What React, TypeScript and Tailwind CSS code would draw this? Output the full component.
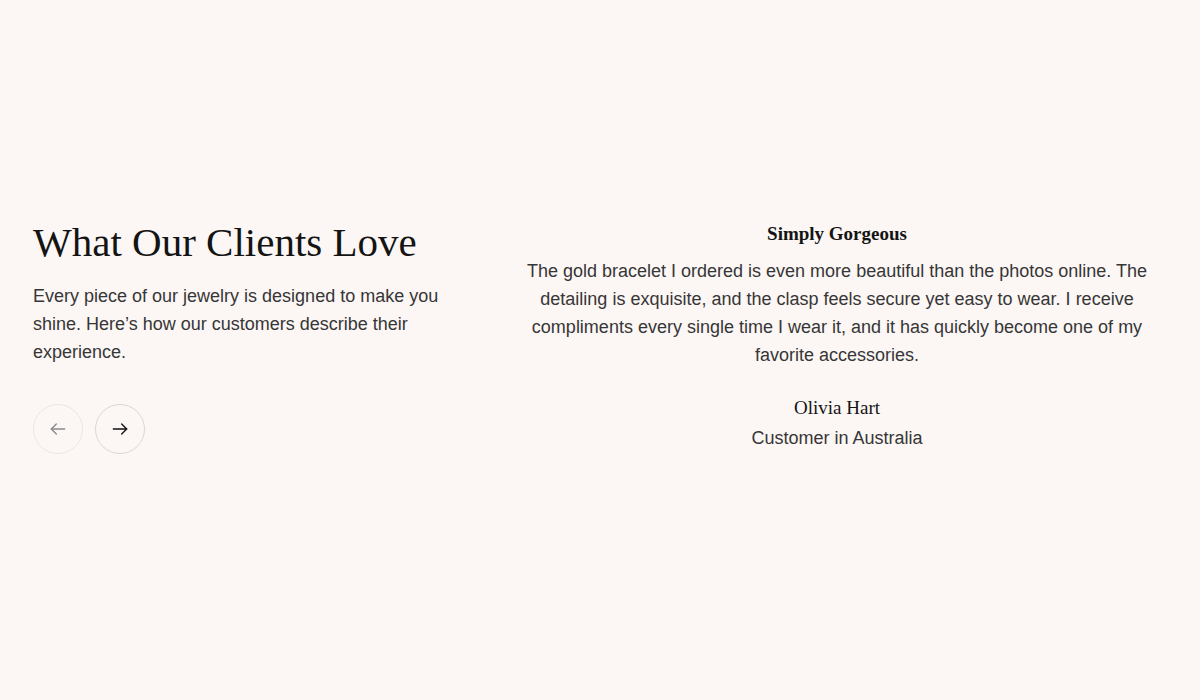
import React from "react";

const serif = "font-['Liberation_Serif',serif]";
const sans = "font-['Liberation_Sans',Arial,sans-serif]";

function ArrowLeft() {
  return (
    <svg width="20" height="20" viewBox="0 0 24 24" fill="none" stroke="currentColor" strokeWidth="1.6" strokeLinecap="round" strokeLinejoin="round">
      <path d="M20 12H4" />
      <path d="M10 6l-6 6 6 6" />
    </svg>
  );
}

function ArrowRight() {
  return (
    <svg width="20" height="20" viewBox="0 0 24 24" fill="none" stroke="currentColor" strokeWidth="1.6" strokeLinecap="round" strokeLinejoin="round">
      <path d="M4 12h16" />
      <path d="M14 6l6 6-6 6" />
    </svg>
  );
}

export default function App() {
  return (
    <div className="h-[700px] w-full bg-[#fcf7f5] pt-[215px]">
      <div className="w-full px-[33px] flex items-start">
        {/* Left intro */}
        <div className="w-[440px] shrink-0">
          <h2 className={`${serif} mt-[3px] text-[41px] leading-[48px] text-[#141414]`}>What Our Clients Love</h2>
          <p className={`${sans} mt-[16px] text-[18px] leading-[28px] text-[#363636]`}>
            Every piece of our jewelry is designed to make you shine. Here’s how our customers describe their experience.
          </p>
          <div className="mt-[38px] flex gap-[12px]">
            <button className="w-[50px] h-[50px] rounded-full border border-[#ebe6e3] flex items-center justify-center text-[#8a8a8a]">
              <ArrowLeft />
            </button>
            <button className="w-[50px] h-[50px] rounded-full border border-[#dcd7d4] flex items-center justify-center text-[#111]">
              <ArrowRight />
            </button>
          </div>
        </div>

        {/* Testimonial */}
        <div className="flex-1 pl-[34px] pt-[6px] flex flex-col items-center text-center">
          <h3 className={`${serif} font-bold text-[19px] leading-[26px] text-[#141414]`}>Simply Gorgeous</h3>
          <p className={`${sans} mt-[10px] max-w-[655px] text-[18px] leading-[28px] text-[#363636]`}>
            The gold bracelet I ordered is even more beautiful than the photos online. The detailing is exquisite, and the clasp feels secure yet easy to wear. I receive compliments every single time I wear it, and it has quickly become one of my favorite accessories.
          </p>
          <div className={`${serif} mt-[26px] text-[19px] leading-[26px] text-[#141414]`}>Olivia Hart</div>
          <div className={`${sans} mt-[4px] text-[18px] leading-[26px] text-[#363636]`}>Customer in Australia</div>
        </div>
      </div>
    </div>
  );
}
